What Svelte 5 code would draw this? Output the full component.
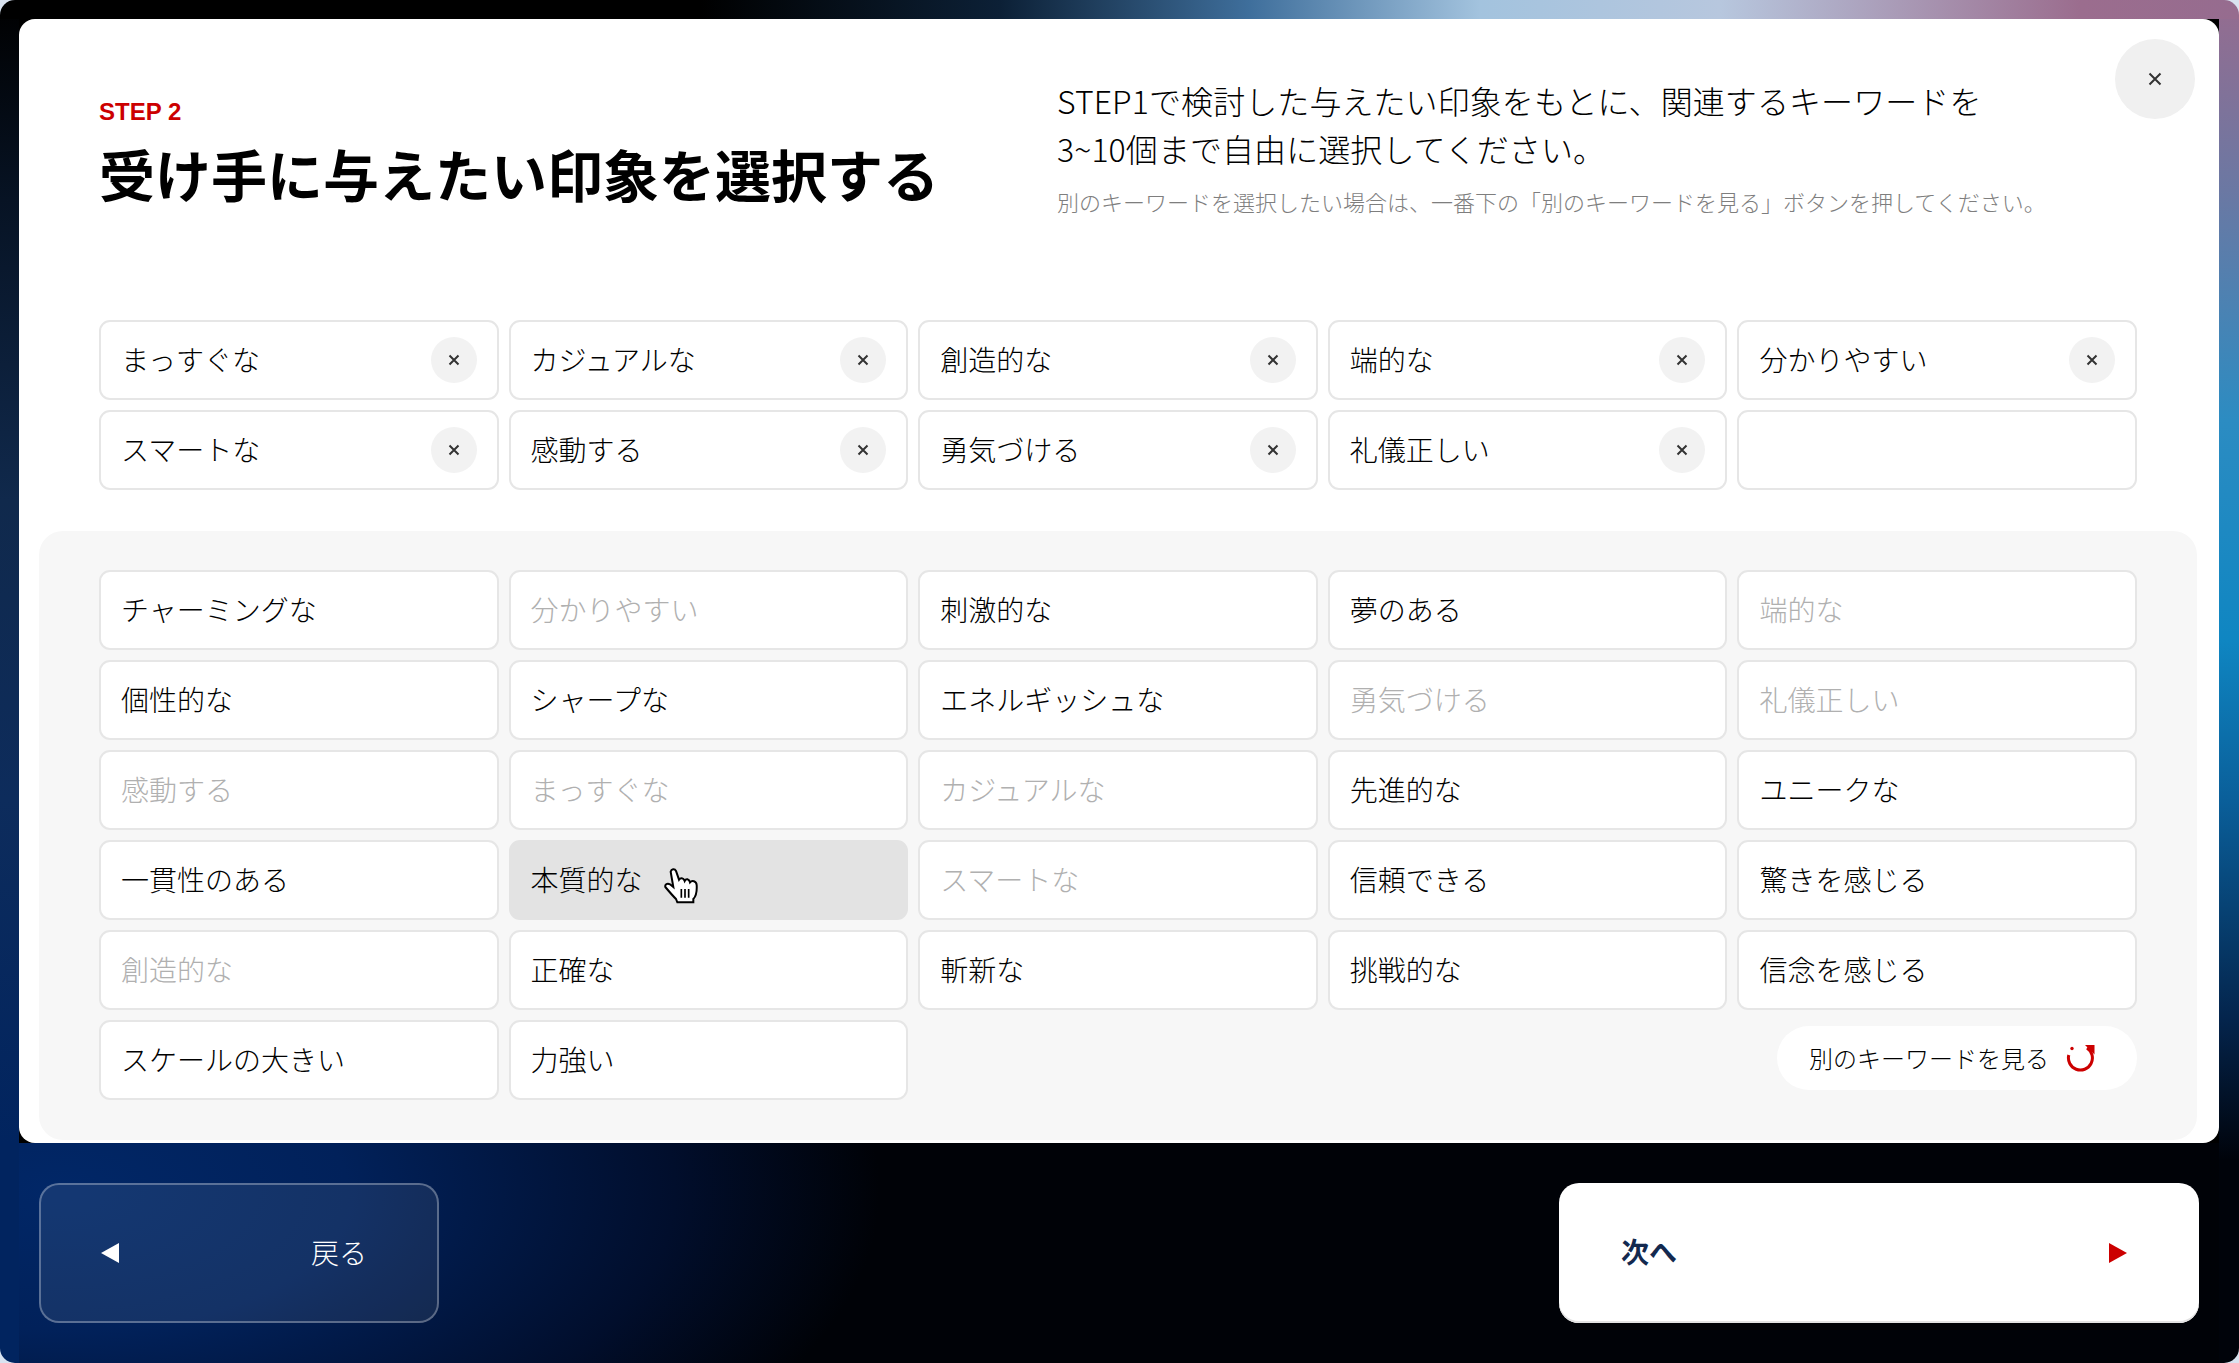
<script>
  // selected keywords, top grid. the last slot stays empty
  const picked = ['まっすぐな', 'カジュアルな', '創造的な', '端的な', '分かりやすい', 'スマートな', '感動する', '勇気づける', '礼儀正しい', ''];

  const keywords = [
    'チャーミングな', '分かりやすい', '刺激的な', '夢のある', '端的な',
    '個性的な', 'シャープな', 'エネルギッシュな', '勇気づける', '礼儀正しい',
    '感動する', 'まっすぐな', 'カジュアルな', '先進的な', 'ユニークな',
    '一貫性のある', '本質的な', 'スマートな', '信頼できる', '驚きを感じる',
    '創造的な', '正確な', '斬新な', '挑戦的な', '信念を感じる',
    'スケールの大きい', '力強い'
  ];
</script>

<div class="stage">
  <main class="card">
    <button class="close" aria-label="閉じる">
      <svg width="14" height="14" viewBox="0 0 14 14"><path class="x" d="M1.5 1.5l11 11M12.5 1.5l-11 11" /></svg>
    </button>

    <header class="head">
      <div class="title">
        <p class="step">STEP 2</p>
        <h1>受け手に与えたい印象を選択する</h1>
      </div>
      <div class="desc">
        <p class="lead">STEP1で検討した与えたい印象をもとに、関連するキーワードを<br />3~10個まで自由に選択してください。</p>
        <p class="note">別のキーワードを選択したい場合は、一番下の「別のキーワードを見る」ボタンを押してください。</p>
      </div>
    </header>

    <section class="grid picked">
      {#each picked as word}
        <div class="chip">
          <span>{word}</span>
          {#if word}
            <button class="remove" aria-label="削除">
              <svg width="12" height="12" viewBox="0 0 12 12"><path class="x" d="M1.500 1.500l9 9M10.500 1.500l-9 9" /></svg>
            </button>
          {/if}
        </div>
      {/each}
    </section>

    <section class="panel">
      <div class="grid">
        {#each keywords as word}
          <div class="chip" class:off={picked.includes(word)} class:hover={word === '本質的な'}>
            <span>{word}</span>
            {#if word === '本質的な'}
              <svg class="cursor" width="34" height="36" viewBox="0 0 102 106">
                <path class="hand" d="M20 10C22 2 32 0 36 8L45 34C49 28 58 27 62 38C66 30 75 31 78 42C84 35 97 38 98 50C99 66 96 84 88 92L88 102L40 102L36 92C26 82 14 68 4 56C2 48 10 44 18 48L28 56Z" />
                <path class="lines" d="M52 62V88M63 62V88M74 62V88" />
              </svg>
            {/if}
          </div>
        {/each}
        <button class="more">
          <span>別のキーワードを見る</span>
          <svg class="reload" width="30" height="28" viewBox="14 9 30 28">
            <path class="arc" d="M36 13A12 12 0 1 1 17.800 20" />
            <circle cx="21" cy="13.500" r="1.700" />
            <polygon points="34,10 43.500,10 43.500,19.500" />
          </svg>
        </button>
      </div>
    </section>
  </main>

  <footer class="foot">
    <button class="nav back"><i class="tri left"></i><span>戻る</span></button>
    <button class="nav next"><span>次へ</span><i class="tri right"></i></button>
  </footer>
</div>

<style>
  :global(body) {
    background: #d9e3f0;
  }

  * {
    box-sizing: border-box;
  }

  p, h1 {
    margin: 0;
  }

  button {
    font: inherit;
    border: none;
    padding: 0;
    cursor: pointer;
  }

  .stage {
    width: 2239px;
    height: 1363px;
    padding: 19px 19px 0;
    border-radius: 15px;
    overflow: hidden;
    font-family: "Noto Sans CJK JP", "Noto Sans", sans-serif;
    font-weight: 300;
    color: #000;
    background:
      linear-gradient(90deg, #000 0, #000 700px, #0c2036 1000px, #3f6f9c 1250px, #a3c3de 1480px, #b7c7de 1720px, #9b6d8e 2080px, #966c8f 2239px) top / 100% 19px no-repeat,
      linear-gradient(180deg, #966c8f 0, #6b78a3 190px, #2c8cc2 420px, #0f86c2 640px, #0a5f9a 800px, #04244c 1020px, #00030a 1160px) right / 20px 100% no-repeat,
      linear-gradient(180deg, #000 0, #071324 200px, #10294c 500px, #0d2c5c 800px, #01245f 1143px) left / 19px 100% no-repeat,
      radial-gradient(ellipse 820px 400px at 60px 47px, #012767 0, #01215a 35%, #010e2c 75%, #000207 100%) bottom left / 100% 220px no-repeat,
      #000;
  }

  .card {
    position: relative;
    width: 2200px;
    height: 1124px;
    padding: 0 22px 3px 20px;
    background: #fff;
    border-radius: 16px;
    display: flex;
    flex-direction: column;
  }

  .close {
    position: absolute;
    top: 20px;
    right: 24px;
    width: 80px;
    height: 80px;
    border-radius: 50%;
    background: #f0f0f0;
    display: flex;
    align-items: center;
    justify-content: center;
  }

  .x {
    stroke: #333;
    stroke-width: 2;
    fill: none;
  }

  .head {
    display: flex;
    height: 301px;
    padding: 81px 0 0 60px;
  }

  .title {
    width: 958px;
  }

  .step {
    font-family: "Liberation Sans", sans-serif;
    font-weight: 700;
    font-size: 24px;
    line-height: 24px;
    color: #cc0000;
  }

  h1 {
    margin-top: 13px;
    font-size: 56px;
    line-height: 72px;
    font-weight: 700;
    color: #000;
  }

  .desc {
    margin-top: -24px;
  }

  .lead {
    font-size: 32px;
    line-height: 48px;
    letter-spacing: 0.08px;
  }

  .note {
    margin-top: 14px;
    font-size: 22px;
    line-height: 30px;
    color: #7e7e7e;
  }

  .grid {
    display: grid;
    grid-template-columns: repeat(5, 1fr);
    grid-auto-rows: 80px;
    gap: 10px;
  }

  .picked {
    margin: 0 60px;
  }

  .chip {
    position: relative;
    display: flex;
    align-items: center;
    justify-content: space-between;
    padding: 0 20px 2px 20px;
    background: #fff;
    border: 2px solid #e6e6e6;
    border-radius: 11px;
    font-size: 28px;
    line-height: 40px;
  }

  .off {
    color: #b0b0b0;
  }

  .hover {
    background: #e3e3e3;
    border-color: #e3e3e3;
  }

  .remove {
    width: 46px;
    height: 46px;
    margin-top: 2px;
    border-radius: 50%;
    background: #f2f2f2;
    display: flex;
    align-items: center;
    justify-content: center;
  }

  .panel {
    margin-top: 41px;
    flex: 1;
    padding: 39px 60px 0;
    background: #f7f7f7;
    border-radius: 24px;
  }

  .cursor {
    position: absolute;
    left: 153px;
    top: 26px;
  }

  .cursor .hand {
    fill: #fff;
    stroke: #000;
    stroke-width: 6;
  }

  .cursor .lines {
    stroke: #000;
    stroke-width: 5;
    fill: none;
  }

  .more {
    grid-column: 4 / 6;
    justify-self: end;
    margin-top: 6px;
    width: 360px;
    height: 64px;
    border-radius: 32px;
    background: #fff;
    color: #000;
    font-size: 24px;
    display: flex;
    align-items: center;
    padding-left: 32px;
    gap: 16px;
  }

  .more span {
    margin-top: -2px;
  }

  .reload {
    fill: #cc0000;
  }

  .reload .arc {
    fill: none;
    stroke: #cc0000;
    stroke-width: 3;
  }

  .foot {
    display: flex;
    justify-content: space-between;
    margin-top: 40px;
    padding: 0 21px 0 20px;
  }

  .nav {
    height: 140px;
    border-radius: 20px;
    font-size: 28px;
    display: flex;
    align-items: center;
    justify-content: space-between;
  }

  .nav span {
    margin-top: -2px;
  }

  .back {
    width: 400px;
    padding: 0 70px 0 60px;
    color: #fff;
    background: rgba(255, 255, 255, 0.08);
    border: 2px solid rgba(255, 255, 255, 0.3);
  }

  .next {
    width: 640px;
    padding: 0 72px 0 62px;
    color: #13294f;
    font-weight: 700;
    background: #fff;
    box-shadow: inset 0 -2px 0 #e3e3e3;
  }

  .next span {
    margin-top: -4px;
  }

  .tri {
    width: 0;
    height: 0;
    border-top: 10px solid transparent;
    border-bottom: 10px solid transparent;
  }

  .left {
    border-right: 18px solid #fff;
  }

  .right {
    border-left: 18px solid #cc0000;
  }
</style>
